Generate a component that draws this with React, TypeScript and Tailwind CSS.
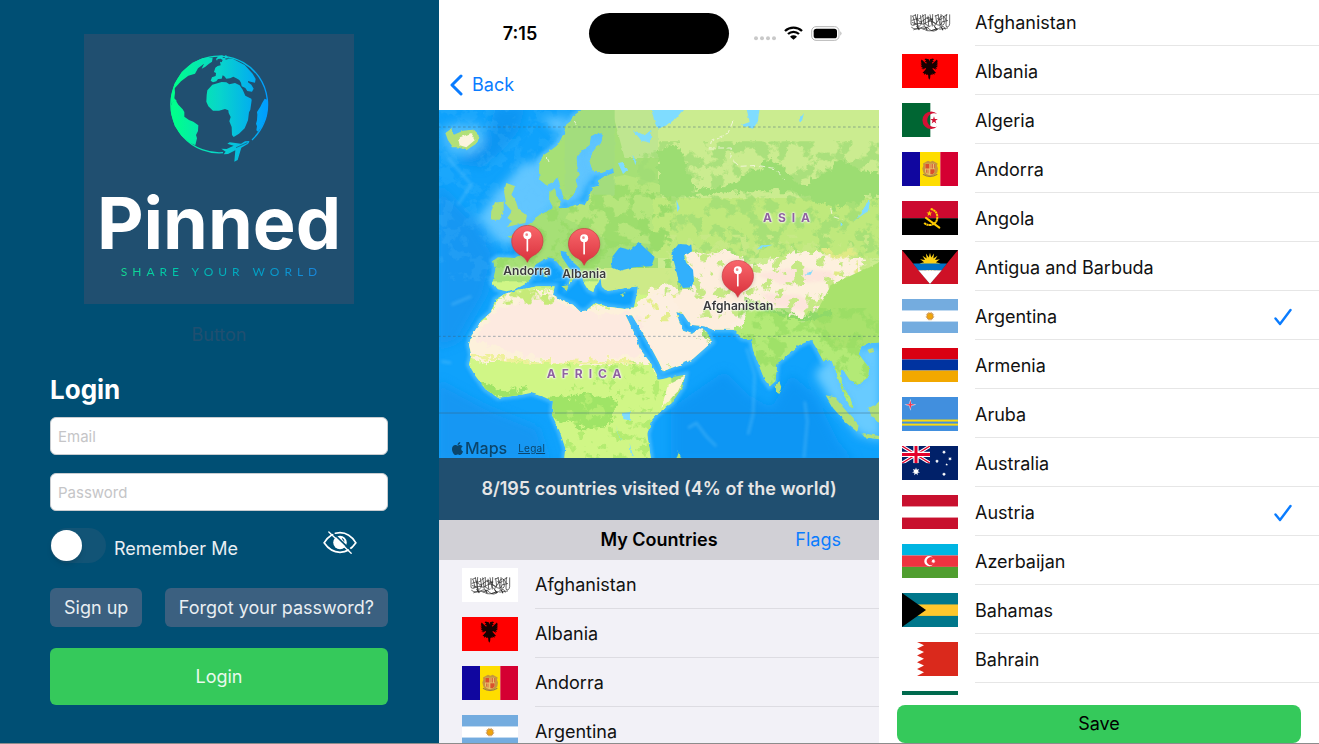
import type { ReactNode } from "react";
import { FaApple } from "react-icons/fa";

/* ---------- flags, drawn on a 168 x 101 field ---------- */

const Rect = ({ x = 0, y = 0, w = 168, h = 101, c }: { x?: number; y?: number; w?: number; h?: number; c: string }) => (
  <rect x={x} y={y} width={w} height={h} fill={c} />
);

const starPoints = (cx: number, cy: number, outer: number, inner: number, points: number) =>
  Array.from({ length: points * 2 }, (_, i) => {
    const r = i % 2 ? inner : outer;
    const a = (Math.PI * i) / points - Math.PI / 2;
    return `${(cx + r * Math.cos(a)).toFixed(1)},${(cy + r * Math.sin(a)).toFixed(1)}`;
  }).join(" ");

const flags: Record<string, ReactNode> = {
  Afghanistan: (
    <>
      <Rect c="#fff" />
      <g fill="none" stroke="#222" strokeWidth="2">
        <path d="M27 30v28q5 6 12-2l-6-22M40 28l9 40M47 27l-2 33q8 8 14-6l-4-24M62 28l5 36M70 27v30l10 5-2-30M84 28l7 36M92 27l-1 32q10 5 13-6l-3-22M108 27l7 38M117 27v33q8 2 10-6l-3-20M133 27l-1 36q9 6 11-8V28" />
        <path d="M28 66q14 10 28 2t26 4 28-2 20 3M34 74q20-10 34-1t36-3M29 46q12-8 20 0t20-4 22 5 20-5 22 4M40 38q9 8 17 0M74 39q10 8 18 1M106 40q8 8 16-1M52 54q12 7 22-2t26 3 20-4" />
        <path d="M30 34l12-5M58 36l10-7M98 33l12-4M124 35l12-6M34 60l26-8M62 72l24-10M88 76l20-6M112 72l26-4M30 52l14 4M78 48l16-6M120 50l18-4" />
        <path d="M44 62l8 12M70 66l6 9M97 63l8 11M118 65l5 10" strokeWidth="3" />
      </g>
    </>
  ),
  Albania: (
    <>
      <Rect c="#f00" />
      <path
        transform="translate(13 -4) scale(.85)"
        d="M84 32l-5-9-11-3-4 4 6 3-5 5 7 2-2 5-16-15-3 7 3 2-4 4 5 2-5 5 6 1-5 5 7 1-5 5 8-1-5 6 12-7 2 2-13 15 6 1-1 5 8-4-1 5 5-2 3 2 1 11 3 6 3-6 1-11 3-2 5 2-1-5 8 4-1-5 6-1-13-15 2-2 12 7-5-6 8 1-5-5 7-1-5-5 6-1-5-5 5-2-4-4 3-2-3-7-16 15-2-5 7-2-5-5 6-3-4-4-11 3z"
        fill="#160000"
      />
    </>
  ),
  Algeria: (
    <>
      <Rect c="#fff" />
      <Rect w={85} c="#006633" />
      <path d="M106 33a26 26 0 1 0 0 36a20.500 20.500 0 1 1 0-36z" fill="#d21034" />
      <polygon points={starPoints(96, 51, 12, 4.5, 5)} fill="#d21034" />
    </>
  ),
  Andorra: (
    <>
      <Rect w={55} c="#10069f" />
      <Rect x={54} w={61} c="#fedd00" />
      <Rect x={115} w={53} c="#d50032" />
      <path d="M63 34l8-4 7-4 7 3 7-3 7 4 8 4-2 7 3 8-2 12-8 8-7 2-7 4-7-4-7-2-6-8-3-12 3-8z" fill="#c5963f" />
      <path d="M69 35h30v24q-3 8-15 10-12-2-15-10z" fill="#e8c16a" />
      <path d="M70 36h12v13H70zM85 51h13v9l-6 6h-7z" fill="#d9512c" />
      <path d="M86 36h2v13h-2zM91 36h2v13h-2zM96 36h2v13h-2zM72 52h2v10h-2zM77 52h2v12h-2z" fill="#d0432c" />
      <path d="M63 66q21 14 43 0" stroke="#9a7a45" strokeWidth="3" fill="none" />
    </>
  ),
  Angola: (
    <>
      <Rect h={51} c="#cc092f" />
      <Rect y={51} h={50} c="#000" />
      <path d="M86 24q19 4 20 23 0 20-20 24-13 1-20-6" fill="none" stroke="#ffcb00" strokeWidth="6" strokeDasharray="7 1" />
      <path d="M72 50q16 12 40 29" fill="none" stroke="#ffcb00" strokeWidth="6" strokeLinecap="round" />
      <polygon points={starPoints(82, 37, 9, 4, 5)} fill="#ffcb00" />
    </>
  ),
  "Antigua and Barbuda": (
    <>
      <Rect c="#ce1126" />
      <path d="M0 0h168L84 101z" fill="#000" />
      <polygon points={starPoints(84, 40, 32, 18, 16)} fill="#fcd116" />
      <path d="M33 40h102l-16 20H49z" fill="#0072c6" />
      <path d="M49 60h70L84 101z" fill="#fff" />
    </>
  ),
  Argentina: (
    <>
      <Rect c="#74acdf" />
      <Rect y={34} h={33} c="#fff" />
      <polygon points={starPoints(84, 51, 14, 9, 16)} fill="#c98a3a" />
      <circle cx="84" cy="51" r="8" fill="#f0a50c" />
    </>
  ),
  Armenia: (
    <>
      <Rect h={34} c="#d90012" />
      <Rect y={34} h={33} c="#0033a0" />
      <Rect y={67} h={34} c="#f2a800" />
    </>
  ),
  Aruba: (
    <>
      <Rect c="#418fde" />
      <Rect y={67} h={6} c="#f9d90f" />
      <Rect y={79} h={6} c="#f9d90f" />
      <polygon points={starPoints(25, 23, 18, 4.5, 4)} fill="#fff" />
      <polygon points={starPoints(25, 23, 14, 3.5, 4)} fill="#f2334d" />
    </>
  ),
  Australia: (
    <>
      <Rect c="#012169" />
      <svg width="84" height="51" viewBox="0 0 84 51">
        <path d="M0 0l84 51M84 0L0 51" stroke="#fff" strokeWidth="10" />
        <path d="M0 0l84 51M84 0L0 51" stroke="#e4002b" strokeWidth="4" />
        <path d="M42 0v51M0 25h84" stroke="#fff" strokeWidth="16" />
        <path d="M42 0v51M0 25h84" stroke="#e4002b" strokeWidth="9" />
      </svg>
      <polygon points={starPoints(42, 76, 12, 6, 7)} fill="#fff" />
      <polygon points={starPoints(126, 18, 6, 3, 7)} fill="#fff" />
      <polygon points={starPoints(105, 45, 6, 3, 7)} fill="#fff" />
      <polygon points={starPoints(144, 38, 6, 3, 7)} fill="#fff" />
      <polygon points={starPoints(126, 84, 6, 3, 7)} fill="#fff" />
      <polygon points={starPoints(134, 55, 4, 2, 5)} fill="#fff" />
    </>
  ),
  Austria: (
    <>
      <Rect c="#c8102e" />
      <Rect y={34} h={33} c="#fff" />
    </>
  ),
  Azerbaijan: (
    <>
      <Rect h={34} c="#00b5e2" />
      <Rect y={34} h={34} c="#ef3340" />
      <Rect y={68} h={33} c="#509e2f" />
      <path d="M93 41a15 15 0 1 0 0 20a12 12 0 1 1 0-20z" fill="#fff" />
      <polygon points={starPoints(94, 51, 7, 3.5, 8)} fill="#fff" />
    </>
  ),
  Bahamas: (
    <>
      <Rect c="#00778b" />
      <Rect y={34} h={34} c="#ffc72c" />
      <path d="M0 0l72 50.500L0 101z" fill="#000" />
    </>
  ),
  Bahrain: (
    <>
      <Rect c="#fff" />
      <path d="M168 0H45l21 10-21 10 21 10-21 10 21 10-21 10 21 10-21 10 21 10-21 11h123z" fill="#da291c" />
    </>
  ),
};

const FlagFrame = ({ children }: { children: ReactNode }) => (
  <svg viewBox="0 0 168 101" className="h-[34px] w-14 shrink-0" preserveAspectRatio="none" aria-hidden="true">
    {children}
  </svg>
);

/* ---------- login ---------- */

const GlobeLogo = () => (
  <svg viewBox="268 76 300 324" className="h-[108px] w-[100px]" aria-hidden="true">
    <defs>
      <linearGradient id="globe" gradientUnits="userSpaceOnUse" x1="285" y1="0" x2="560" y2="0">
        <stop offset="0" stopColor="#00ff8c" />
        <stop offset="0.5" stopColor="#08d4cc" />
        <stop offset="1" stopColor="#009dff" />
      </linearGradient>
    </defs>
    <path d="M430 369A145 145 0 1 1 517 331" fill="none" stroke="url(#globe)" strokeWidth="4" />
    <g fill="url(#globe)">
      <path d="M399 84l-2 12-9 6-12 10-10 5 7-15-18 14-9 16-20 6-22 17-19 21 1 13-2 17 8 9-8-1-9 9-1-22 10-38 22-36 32-28 32-14z" />
      <path d="M279 216l9-4 8 13 13 14 5 8 0 14 14 10 13 5 15 11-1 17-6 12 3 10-5 21-15-7-27-22-20-30-10-35-1-25z" />
      <path d="M428 84l31 3 36 19 24 26 9 16-2 11-10-2-11-3 0 4 10 7 7 12-5 9-14-2-6-9-11-5-2-11-5-8-9-5-9-5-10 5-11 1-6-7-5-3-3 10-11 1-5 7-10 3-7-5 4-10 11-4 1-9-6-3 4-13 7-5 9-2-2-11 5 2 3-7-6-4-9 1-2 5-3-5 8-9 10-2 8 4 3 9 10-3-9-11z" />
      <path d="M383 182L398 165 426 157 440 158 449 164 466 160 480 167 489 180 497 198 515 207 516 212 512 240 508 248 505 272 495 296 478 312 462 322 457 316 456 292 449 275 453 262 447 250 446 242 436 238 418 243 400 243 386 230 380 216 381 196z" />
      <path d="M555 207l8 3 2 20-5 31-14 30-11 15-5-4 2-12-3-8 3-10 1-17-1-8 10-16 5-10z" />
      <path d="M509 334Q509 342 499 346L485 354 474 391 464 396 467 362 445 373 432 374 438 366 425 357 441 358 462 348 443 342 450 338 484 342 496 335z" />
    </g>
    <path d="M469 354l34-15" stroke="#204f70" strokeWidth="2" />
  </svg>
);

const HiddenEye = () => (
  <svg viewBox="0 0 100 68" className="h-[23px] w-[34px]" fill="none" aria-hidden="true">
    <path d="M3 35Q22 5 50 5t47 30Q78 63 50 63T3 35z" stroke="#fff" strokeWidth="5" />
    <circle cx="50" cy="34" r="20" fill="#fff" />
    <path d="M56 22a10 10 0 0 1 6 9" stroke="#004f74" strokeWidth="3" />
    <path d="M23 0l62 60" stroke="#004f74" strokeWidth="5" />
    <path d="M17 3l66 63" stroke="#fff" strokeWidth="4" strokeLinecap="round" />
  </svg>
);

const fieldClass =
  "h-[38px] w-full rounded-md border border-[#c8ccd0] bg-white px-[7px] text-[15px] text-gray-900 placeholder:text-[#c5c5c7]";

const LoginScreen = () => (
  <section className="flex flex-col overflow-hidden bg-[#004f74] pt-[34px] pr-[51px] pl-[50px]">
    <div className="flex h-[270px] w-[270px] flex-col items-center self-center bg-[#204f70] pt-[21px]">
      <GlobeLogo />
      <p className="mt-[24px] text-[72px] leading-[72px] font-bold text-white">Pinned</p>
      <p className="mt-[6px] bg-gradient-to-r from-[#17e08d] to-[#1a83dc] bg-clip-text pl-[5px] font-[Lato] text-xs leading-[14px] tracking-[5px] whitespace-nowrap text-transparent">
        SHARE YOUR WORLD
      </p>
    </div>
    <button type="button" className="mt-4 h-[30px] self-center text-lg text-[#204f70]">
      Button
    </button>
    <form className="flex flex-col" onSubmit={(e) => e.preventDefault()}>
      <h1 className="mt-6 text-[26px] leading-8 font-bold text-white">Login</h1>
      <input type="email" aria-label="Email" placeholder="Email" className={`mt-[11px] ${fieldClass}`} />
      <input type="password" aria-label="Password" placeholder="Password" className={`mt-[18px] ${fieldClass}`} />
      <div className="mt-4 flex h-9 items-center">
        <input
          id="remember"
          type="checkbox"
          role="switch"
          className="flex h-[35px] w-14 appearance-none items-center rounded-full bg-[#125476] pl-px before:size-[31px] before:rounded-full before:bg-white before:shadow-md"
        />
        <label htmlFor="remember" className="ml-2 pt-2 text-lg text-[#e9eef2]">
          Remember Me
        </label>
        <button type="button" aria-label="Show password" className="mr-[31px] mb-1.5 ml-auto">
          <HiddenEye />
        </button>
      </div>
      <div className="mt-[25px] flex justify-between gap-4">
        <button type="button" className="h-[39px] rounded-md bg-[#3b6080] px-[14px] text-lg whitespace-nowrap text-[#e9eef2]">
          Sign up
        </button>
        <button type="button" className="h-[39px] rounded-md bg-[#3b6080] px-[14px] text-lg whitespace-nowrap text-[#e9eef2]">
          Forgot your password?
        </button>
      </div>
      <button type="submit" className="mt-[21px] h-[57px] rounded-md bg-[#35c95b] text-lg text-[#e9f9ed]">
        Login
      </button>
    </form>
  </section>
);

/* ---------- map ---------- */

const EURASIA =
  "M440 0L405 25 398 40 385 50 378 75 360 110 335 130 318 140 306 155 303 185 305 215 325 232 345 222 358 208 368 240 378 272 390 277 405 262 418 235 412 215 425 200 418 180 415 150 430 130 455 110 458 85 480 73 495 85 490 105 465 130 455 160 465 190 490 195 525 180 528 195 500 205 478 220 484 235 462 238 455 265 440 292 420 288 385 300 362 300 368 280 355 265 352 240 334 250 333 275 345 298 325 312 300 322 290 340 262 355 240 365 238 380 208 385 225 395 240 410 246 440 230 450 180 448 165 458 172 485 163 525 175 542 205 550 235 542 262 528 280 510 284 485 295 468 330 448 350 452 370 480 398 505 392 530 408 515 415 500 392 478 370 445 368 428 385 432 402 460 425 480 436 520 452 545 466 552 472 530 488 512 492 540 510 548 560 540 600 535 596 560 588 598 560 603 510 596 470 585 445 608 425 610 405 590 375 578 345 560 350 535 300 535 240 545 200 558 172 575 160 612 130 638 100 685 93 710 100 740 93 770 112 803 142 843 180 869 240 862 280 855 320 868 345 880 342 920 365 970 382 1020 378 1060 640 1060 628 980 638 940 660 915 702 885 735 835 742 800 700 808 664 815 640 768 605 722 590 678 562 620 582 622 610 668 640 720 664 765 675 790 760 757 822 702 806 672 790 658 762 678 735 668 722 635 715 612 735 618 757 650 798 655 825 665 888 665 912 690 940 695 945 725 960 765 980 815 995 835 1012 820 1018 765 1050 740 1082 712 1120 695 1138 725 1156 760 1180 755 1195 795 1205 825 1218 862 1238 897 1246 900 1236 868 1212 832 1208 785 1215 785 1235 815 1258 830 1290 808 1293 780 1262 738 1270 715 1300 705 1330 702V0z";

const AppleMap = () => (
  <svg viewBox="3 6 1320 1044" preserveAspectRatio="xMidYMid slice" className="h-full w-full" aria-hidden="true">
    <defs>
      <clipPath id="land">
        <path d={EURASIA} />
      </clipPath>
      <filter id="soft" x="-20%" y="-20%" width="140%" height="140%">
        <feGaussianBlur stdDeviation="14" />
      </filter>
      <filter id="edge" x="-10%" y="-10%" width="120%" height="120%">
        <feGaussianBlur stdDeviation="5" />
      </filter>
      <filter id="blotch" x="0" y="0" width="100%" height="100%">
        <feTurbulence type="fractalNoise" baseFrequency="0.022" numOctaves="5" seed="7" />
        <feColorMatrix values="0 0 0 0 0  0 0 0 0 0  0 0 0 0 0  12 0 0 0 -6" result="n" />
        <feComposite in="SourceGraphic" in2="n" operator="in" />
      </filter>
      <filter id="speck" x="0" y="0" width="100%" height="100%">
        <feTurbulence type="fractalNoise" baseFrequency="0.03" numOctaves="4" seed="21" />
        <feColorMatrix values="0 0 0 0 0  0 0 0 0 0  0 0 0 0 0  0 14 0 0 -8" result="n" />
        <feComposite in="SourceGraphic" in2="n" operator="in" />
      </filter>
      <filter id="rough" x="-5%" y="-5%" width="110%" height="110%">
        <feTurbulence type="fractalNoise" baseFrequency="0.04" numOctaves="4" seed="3" />
        <feDisplacementMap in="SourceGraphic" scale="40" xChannelSelector="R" yChannelSelector="G" />
      </filter>
      <filter id="coast" x="-2%" y="-2%" width="104%" height="104%">
        <feTurbulence type="fractalNoise" baseFrequency="0.06" numOctaves="2" seed="5" />
        <feDisplacementMap in="SourceGraphic" scale="9" xChannelSelector="R" yChannelSelector="G" />
      </filter>
    </defs>

    <rect width="1330" height="1060" fill="#0fa2fc" />
    <g filter="url(#soft)">
      <path d="M0 230L110 340 170 440 140 560 60 700 0 720zM0 820L150 900 300 960 330 1060 0 1060z" fill="#1497f3" />
      <path d="M170 0L260 0 240 70 200 120 130 180 60 160 150 90z" fill="#1195f2" />
      <path d="M700 900L860 790 930 860 1000 900 1060 800 1130 860 1200 1000 1250 1060 700 1060z" fill="#0f96f4" />
      <path d="M310 30L400 30 330 150 250 170 170 260 120 330 180 400 250 420 300 350 370 280 480 200 500 60 440 150z" fill="#62c6ff" />
      <path d="M370 280L420 290 470 200 540 190 500 60 440 80 400 200z" fill="#5fc4ff" />
      <path d="M10 60L60 45 130 50 140 110 100 140 30 140z" fill="#5cc3fd" opacity=".8" />
      <path d="M1180 740L1330 700V1000L1260 980 1180 880 1130 800z" fill="#68cbff" />
    </g>
    <path d={EURASIA} fill="none" stroke="#5fc6ff" strokeWidth="18" opacity=".6" filter="url(#edge)" />
    <path d="M30 150l70 80-40 60M40 590l60-25M10 760l30 5M925 720l25 80-5 120-15 60M1100 880l8 60-10 110M750 960l25-15 30 40 30 30" stroke="#7fd1fd" strokeWidth="8" opacity=".3" fill="none" filter="url(#edge)" />
    <rect width="500" height="520" fill="#65c4fb" opacity=".14" filter="url(#blotch)" />

    <g filter="url(#coast)">
      <path d={EURASIA} fill="#a6e076" />
      <g clipPath="url(#land)">
        <rect x="0" y="520" width="700" height="540" fill="#d0f686" />
        <path d="M660 0H1330V480H660z" fill="#cbec90" />
        <path d="M520 0H660V150H560z" fill="#bfe690" />
        <path d="M480 220L560 200 670 230V410L520 400 380 330z" fill="#b6e67c" />
        <path d="M645 270H1330V450H645z" fill="#bfe97c" />
        <path d="M880 600L1330 560V900H880z" fill="#b3ea76" />
        <path d="M480 480H720V560H480z" fill="#cdea88" />
        <path d="M600 100H1330V480H600z" fill="#9fdd74" opacity=".75" filter="url(#blotch)" />
        <path d="M300 230H700V480H150V360z" fill="#98db68" opacity=".8" filter="url(#blotch)" />
        <path d="M660 130L720 110 770 250 900 220 1000 150 1100 240 1200 160 1330 200V260L1190 300 1060 250 900 250 760 270 660 260z" fill="#9cdd72" filter="url(#rough)" />
        <path d="M380 0H530V260H380z" fill="#a3dd7d" />
        {/* deserts and high plateaus */}
        <g filter="url(#rough)">
          <path d="M170 590L200 560 300 545 350 550 440 600 600 590 640 545 760 545 800 560 780 700 760 780 660 800 640 765 440 770 220 750 110 765 80 720 110 650z" fill="#fdf1db" />
          <path d="M175 610L290 560 370 580 440 620 560 610 640 640 680 745 560 740 440 768 330 755 230 735 100 700z" fill="#fdeae0" />
          <path d="M600 600L680 530 740 560 760 620 850 560 930 600 910 660 830 670 740 650 780 690 830 705 760 760 680 780 620 700z" fill="#fdefe0" />
          <path d="M740 440L860 425 960 480 920 580 860 670 760 660 700 560 765 540z" fill="#fdeedd" />
          <path d="M930 480L1060 430 1210 440 1290 460 1270 520 1190 560 1180 620 1090 635 980 590 900 560z" fill="#fdf0de" />
        </g>
        <path d="M950 500L1060 480 1180 490 1190 515 1040 530zM970 555L1080 560 1160 600 1090 610 1000 590z" fill="#fde5dc" filter="url(#edge)" />
        <path d="M680 380H1330V630H680z" fill="#c6e985" filter="url(#speck)" />
        <path d="M1150 420H1260V500H1150z" fill="#e0ea85" filter="url(#blotch)" />
        <path d="M600 560H720V640H600z" fill="#e4ee8c" filter="url(#speck)" />
        <path d="M1180 530L1330 460V720H1180L1120 640z" fill="#a9e26c" />
        <path d="M160 540H350V590H150z" fill="#c6ea78" filter="url(#blotch)" />
        <path d="M330 865L400 870 460 855 540 880 530 920 500 965 440 960 400 945 345 935z" fill="#9fe466" filter="url(#rough)" />
        <path d="M130 820L200 850 270 840 240 870 150 870z" fill="#9fe466" filter="url(#rough)" />
        <path d="M900 600H1330V900H900z" fill="#97dd63" opacity=".7" filter="url(#blotch)" />
        <path d="M380 760H700V1060H380z" fill="#b3ec70" filter="url(#speck)" />
        <path d="M100 740L300 765 600 760" stroke="#eef19a" strokeWidth="10" fill="none" filter="url(#rough)" />
        <path d="M690 830L745 800 720 850 670 900z" fill="#fdf3d2" />
        <path d="M980 600L1090 635 1180 615" stroke="#8fd968" strokeWidth="14" fill="none" filter="url(#rough)" />
      </g>
      {/* islands */}
      <g fill="#b2e078">
        <path d="M205 225L232 235 220 260 232 275 240 300 267 322 262 345 235 350 203 358 222 340 208 330 222 310 205 290 198 250z" />
        <path d="M170 285L197 280 197 315 185 335 158 335 160 310z" />
        <path d="M30 97L22 75 40 62 48 80 75 68 105 65 124 85 118 105 85 127 60 118 45 118z" />
        <path d="M1013 828L1024 822 1032 842 1024 858 1014 852z" />
        <path d="M1163 862L1190 868 1230 915 1262 950 1258 972 1225 945 1185 900zM1270 975L1330 985V995L1280 988zM1292 900L1330 880V950L1300 925zM1288 725L1305 720 1308 732 1294 736z" />
        <path d="M715 1052L722 1030 730 1050zM318 478h7v28h-8zM370 535l22-3-6 14zM545 560l18-5-8 9zM355 285l10-4 2 12-10 3z" />
      </g>
      <path d="M60 90L100 75 112 95 85 118 65 112z" fill="#fbf4dd" />
      {/* inland waters */}
      <g fill="#33b0fc">
        <path d="M520 478L524 445 545 418 575 425 602 402 618 418 650 447 640 475 588 478 545 488z" />
        <path d="M700 435L722 408 760 410 762 430 738 445 745 465 765 485 768 520 760 538 735 540 722 520 715 490z" />
      </g>
      <g fill="#7fdcff">
        <path d="M585 66L620 82 640 65 638 105 610 98zM640 0H740L715 30 690 50 660 62 648 35zM925 0H965L960 40 945 62 908 52 935 42zM1080 40L1098 15 1092 38zM540 165L555 162 570 185 555 198zM583 140L596 155 592 172zM1298 272L1290 310 1245 340 1270 318 1282 290zM955 425L970 412 1005 410 980 418zM715 275L725 300 718 312zM555 915L578 912 575 938 556 932zM530 950L550 1000 545 992zM575 1005L585 1045 578 1040zM1100 500L1125 486 1118 500zM1208 345L1215 350 1208 355z" />
      </g>
      <path d="M885 40L870 75 820 100 815 120 880 120 875 150 905 175 960 172 1010 182 1040 215M325 150l5 12M408 40l6 10M1178 300l5 25 30 10" stroke="#fbf8ea" strokeWidth="3" opacity=".8" strokeDasharray="18 10" fill="none" />
    </g>

    <g stroke="#3d5f77" strokeWidth="3" opacity=".45">
      <path d="M0 57H1330M0 685H1330" strokeDasharray="8 7" />
      <path d="M0 915H1330" />
    </g>
  </svg>
);

const PinIcon = () => (
  <svg viewBox="0 0 102 114" className="h-[38px] w-[34px] drop-shadow-sm" aria-hidden="true">
    <defs>
      <linearGradient id="pin" x1="0" y1="0" x2="0" y2="1">
        <stop offset="0" stopColor="#f8676b" />
        <stop offset="1" stopColor="#d9303c" />
      </linearGradient>
    </defs>
    <path d="M51 112Q46 98 34 92A47 47 0 1 1 68 92Q56 98 51 112z" fill="url(#pin)" stroke="#c93a42" strokeWidth="2" />
    <path d="M51 34v43" stroke="#fff" strokeWidth="5" strokeLinecap="round" />
    <circle cx="51" cy="31" r="12" fill="#fff" />
    <circle cx="49" cy="29" r="4" fill="#f0868a" />
  </svg>
);

const halo = "[text-shadow:0_0_2px_#fff,0_0_2px_#fff,0_0_3px_#fff]";

const MapPin = ({ name, place }: { name: string; place: string }) => (
  <button type="button" className={`absolute flex -translate-x-1/2 flex-col items-center ${place}`}>
    <PinIcon />
    <span className={`text-xs leading-4 font-semibold text-[#3a3a3c] ${halo}`}>{name}</span>
  </button>
);

const Continent = ({ name, place }: { name: string; place: string }) => (
  <span
    className={`absolute -translate-x-1/2 -translate-y-1/2 pl-[6px] text-xs leading-none font-bold tracking-[6px] text-[#8f639f] ${halo} ${place}`}
  >
    {name}
  </span>
);

const StatusIcons = () => (
  <svg viewBox="0 0 264 48" className="h-4 w-[88px]" aria-hidden="true">
    <g fill="#c9c9c9">
      <circle cx="6" cy="37" r="6" />
      <circle cx="24" cy="37" r="6" />
      <circle cx="42" cy="37" r="6" />
      <circle cx="60" cy="37" r="6" />
    </g>
    <g fill="none" stroke="#000" strokeWidth="7">
      <path d="M93 15a37 37 0 0 1 51 0" />
      <path d="M102 24a24 24 0 0 1 33 0" />
    </g>
    <path d="M108 32a15 15 0 0 1 21 0l-10.500 9z" fill="#000" />
    <rect x="173" y="2" width="82" height="41" rx="13" fill="none" stroke="#b5b5b5" strokeWidth="3" />
    <rect x="179" y="8" width="70" height="29" rx="8" fill="#000" />
    <path d="M259 16q7 6 0 13z" fill="#b5b5b5" />
  </svg>
);

const visited = ["Afghanistan", "Albania", "Andorra", "Argentina"];

const MapScreen = () => (
  <section className="flex flex-col overflow-hidden bg-white">
    <div className="grid shrink-0 grid-cols-[1fr_140px_1fr] items-center pt-[13px]">
      <time className="pl-3 text-center text-lg font-semibold text-black">7:15</time>
      <div className="h-[41px] rounded-full bg-black" />
      <div className="flex justify-center pr-3">
        <StatusIcons />
      </div>
    </div>
    <nav className="flex h-14 shrink-0 items-center px-[11px] pt-1.5">
      <a href="#back" className="flex items-center gap-[9px] text-lg text-[#0a7cff]">
        <svg viewBox="0 0 13 22" className="h-[22px] w-[13px]" fill="none" aria-hidden="true">
          <path d="M11 2L2 11l9 9" stroke="currentColor" strokeWidth="3" strokeLinecap="round" strokeLinejoin="round" />
        </svg>
        Back
      </a>
    </nav>
    <div className="relative h-[348px] shrink-0 overflow-hidden">
      <AppleMap />
      <Continent name="ASIA" place="top-[31%] left-[79%]" />
      <Continent name="AFRICA" place="top-[76%] left-[33%]" />
      <MapPin name="Andorra" place="top-[33%] left-[20%]" />
      <MapPin name="Albania" place="top-[34%] left-[33%]" />
      <MapPin name="Afghanistan" place="top-[43%] left-[68%]" />
      <div className="absolute bottom-0 left-[11px] flex items-center text-[#0b456b]">
        <FaApple className="size-[15px]" aria-hidden="true" />
        <span className="text-base leading-5 font-medium">Maps</span>
        <a href="#legal" className="ml-[11px] text-[10px] tracking-wide underline">
          Legal
        </a>
      </div>
    </div>
    <p className="flex h-[62px] shrink-0 items-center justify-center bg-[#204f70] text-lg font-semibold whitespace-nowrap text-[#e6e6e6]">
      8/195 countries visited (4% of the world)
    </p>
    <header className="grid h-10 shrink-0 grid-cols-[1fr_auto_1fr] items-center bg-[#d1d0d6] px-[38px] text-lg">
      <h2 className="col-start-2 font-semibold text-black">My Countries</h2>
      <a href="#flags" className="justify-self-end text-[#0a7cff]">
        Flags
      </a>
    </header>
    <ul className="min-h-0 flex-1 overflow-hidden bg-[#f2f1f7]">
      {visited.map((name) => (
        <li key={name} className="flex items-center gap-[17px] pl-[23px]">
          <FlagFrame>{flags[name]}</FlagFrame>
          <span className="flex h-[49px] flex-1 items-center border-b border-[#dddce2] pt-0.5 text-lg text-[#111]">{name}</span>
        </li>
      ))}
    </ul>
  </section>
);

/* ---------- country picker ---------- */

const CheckMark = () => (
  <svg viewBox="0 0 18 18" className="hidden size-[18px] peer-checked:block" fill="none" aria-hidden="true">
    <path d="M1.500 10.500L6 16 16.500 2" stroke="#0a7cff" strokeWidth="2.400" strokeLinecap="round" strokeLinejoin="round" />
  </svg>
);

const selected = ["Argentina", "Austria"];

const PickerScreen = () => (
  <form className="flex flex-col overflow-hidden bg-white" onSubmit={(e) => e.preventDefault()}>
    <div className="min-h-0 flex-1 overflow-hidden">
      <ul className="-mt-[3px]">
        {Object.keys(flags).map((name) => (
          <li key={name}>
            <label className="flex items-center gap-[17px] pl-[23px]">
              <FlagFrame>{flags[name]}</FlagFrame>
              <span className="flex h-[49px] flex-1 items-center justify-between border-b border-[#e6e6e6] pt-[3px] pr-[27px] text-lg text-[#111]">
                {name}
                <input type="checkbox" defaultChecked={selected.includes(name)} className="peer size-0 appearance-none" />
                <CheckMark />
              </span>
            </label>
          </li>
        ))}
        {/* next row, mostly scrolled out of view */}
        <li className="flex h-[49px] items-center pl-[23px]">
          <FlagFrame>
            <Rect c="#006a4e" />
            <circle cx="76" cy="51" r="33" fill="#f42a41" />
          </FlagFrame>
        </li>
      </ul>
    </div>
    <div className="flex shrink-0 px-[18px] pt-[10px]">
      <button type="submit" className="h-[38px] flex-1 rounded-lg bg-[#35c95b] text-lg text-black">
        Save
      </button>
    </div>
  </form>
);

export default function App() {
  return (
    <main className="grid h-screen grid-cols-[439fr_440fr_440fr] grid-rows-1 border-b border-[#8c8c8c] font-[Inter,Roboto,sans-serif]">
      <LoginScreen />
      <MapScreen />
      <PickerScreen />
    </main>
  );
}
